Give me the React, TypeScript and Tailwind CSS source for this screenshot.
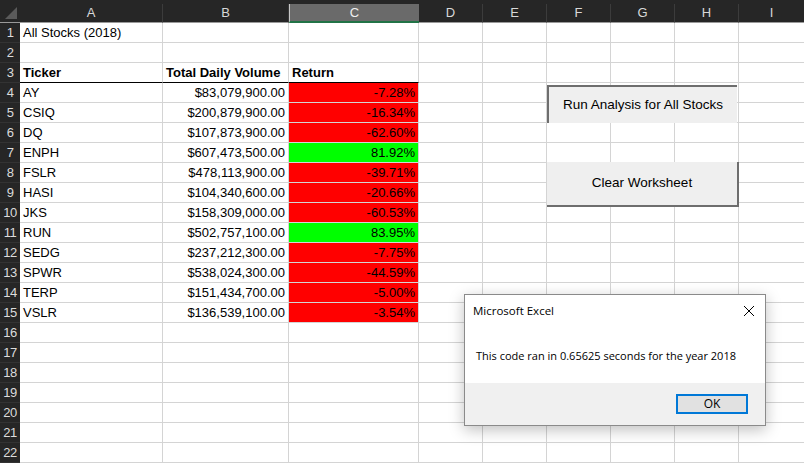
import React from "react"

type Row = {
    ticker: string
    volume: string
    ret: string
    up: boolean
}

const rows: Row[] = [
    { ticker: "AY", volume: "$83,079,900.00", ret: "-7.28%", up: false },
    { ticker: "CSIQ", volume: "$200,879,900.00", ret: "-16.34%", up: false },
    { ticker: "DQ", volume: "$107,873,900.00", ret: "-62.60%", up: false },
    { ticker: "ENPH", volume: "$607,473,500.00", ret: "81.92%", up: true },
    { ticker: "FSLR", volume: "$478,113,900.00", ret: "-39.71%", up: false },
    { ticker: "HASI", volume: "$104,340,600.00", ret: "-20.66%", up: false },
    { ticker: "JKS", volume: "$158,309,000.00", ret: "-60.53%", up: false },
    { ticker: "RUN", volume: "$502,757,100.00", ret: "83.95%", up: true },
    { ticker: "SEDG", volume: "$237,212,300.00", ret: "-7.75%", up: false },
    { ticker: "SPWR", volume: "$538,024,300.00", ret: "-44.59%", up: false },
    { ticker: "TERP", volume: "$151,434,700.00", ret: "-5.00%", up: false },
    { ticker: "VSLR", volume: "$136,539,100.00", ret: "-3.54%", up: false },
]

const cols = [
    { name: "A", w: "w-[143px]" },
    { name: "B", w: "w-[126px]" },
    { name: "C", w: "w-[130px]" },
    { name: "D", w: "w-[64px]" },
    { name: "E", w: "w-[64px]" },
    { name: "F", w: "w-[64px]" },
    { name: "G", w: "w-[64px]" },
    { name: "H", w: "w-[64px]" },
    { name: "I", w: "w-[66px]" },
]

const font = "font-['Liberation_Sans',Arial,sans-serif]"

function cellContent(r: number, c: number) {
    // r is the sheet row number (1-based), c the column index
    if (r === 1 && c === 0) return { text: "All Stocks (2018)", cls: "" }
    if (r === 3 && c === 0) return { text: "Ticker", cls: "font-bold" }
    if (r === 3 && c === 1) return { text: "Total Daily Volume", cls: "font-bold" }
    if (r === 3 && c === 2) return { text: "Return", cls: "font-bold" }
    const d = rows[r - 4]
    if (d && r >= 4) {
        if (c === 0) return { text: d.ticker, cls: "" }
        if (c === 1) return { text: d.volume, cls: "justify-end" }
        if (c === 2) return { text: d.ret, cls: d.up ? "justify-end bg-[#00ff00]" : "justify-end bg-[#ff0000]" }
    }
    return { text: "", cls: "" }
}

const App = () => {
    const sheetRows = Array.from({ length: 22 }, (_, i) => i + 1)

    return (
        <div className={`relative w-[804px] h-[464px] overflow-hidden bg-white ${font}`}>
            <div className="h-[4px] bg-[#262626]" />
            <div className="flex h-[19px] bg-[#262626]">
                <div className="w-[20px] shrink-0 relative border-b border-[#9a9a9a]">
                    <div className="absolute right-[3px] bottom-[3px] w-0 h-0 border-l-[12px] border-l-transparent border-b-[12px] border-b-[#5a5a5a]" />
                </div>
                {cols.map((col) =>
                    col.name === "C" ? (
                        <div
                            key={col.name}
                            className={`${col.w} shrink-0 flex items-center justify-center bg-[#6a6a6a] border-l border-[#c8c8c8] border-b-2 border-b-[#217346] text-[13px] text-[#f0f0f0]`}
                        >
                            {col.name}
                        </div>
                    ) : (
                        <div
                            key={col.name}
                            className={`${col.w} shrink-0 flex items-center justify-center border-r border-[#3c3c3c] border-b border-b-[#9a9a9a] text-[13px] text-[#d8d8d8]`}
                        >
                            {col.name}
                        </div>
                    )
                )}
            </div>

            {sheetRows.map((r) => (
                <div key={r} className="flex h-[20px]">
                    <div className="w-[20px] shrink-0 flex items-center justify-center bg-[#262626] border-b border-[#333333] text-[13px] text-[#dcdcdc] tracking-[-0.5px]">
                        {r}
                    </div>
                    {cols.map((col, c) => {
                        const cell = cellContent(r, c)
                        const headBorder = r === 3 && c <= 2 ? "border-b-black" : "border-b-[#d4d4d4]"
                        return (
                            <div
                                key={col.name}
                                className={`${col.w} shrink-0 flex items-center px-[3px] border-r border-[#d4d4d4] border-b ${headBorder} text-[13px] text-black whitespace-nowrap overflow-visible ${cell.cls}`}
                            >
                                {cell.text}
                            </div>
                        )
                    })}
                </div>
            ))}

            {/* form buttons */}
            <div className="absolute left-[547px] top-[85px] w-[190px] h-[38px] flex items-center justify-center bg-[#efefef] border-t-2 border-l-2 border-[#6e6e6e] text-[13.5px] text-black">
                Run Analysis for All Stocks
            </div>
            <div className="absolute left-[547px] top-[162px] w-[192px] h-[45px] flex items-center justify-center bg-[#efefef] border-r-2 border-b-2 border-[#6e6e6e] text-[13.5px] text-black">
                Clear Worksheet
            </div>

            {/* message box */}
            <div className="absolute left-[464px] top-[294px] w-[302px] h-[132px] flex flex-col border border-[#8a8a8a] bg-white shadow-[0_4px_14px_rgba(0,0,0,0.25)] font-['Open_Sans','Liberation_Sans',sans-serif]">
                <div className="h-[32px] flex items-center justify-between pl-[8px] pr-[10px]">
                    <span className="text-[11.5px] text-black">Microsoft Excel</span>
                    <svg width="12" height="12" viewBox="0 0 12 12">
                        <path d="M1 1 L11 11 M11 1 L1 11" stroke="#000" strokeWidth="1" fill="none" />
                    </svg>
                </div>
                <div className="flex-1 flex items-center pl-[11px] pt-[2px] text-[11px] text-black">
                    This code ran in 0.65625 seconds for the year 2018
                </div>
                <div className="h-[42px] bg-[#f0f0f0] flex items-center justify-end pr-[17px]">
                    <div className="w-[72px] h-[20px] flex items-center justify-center bg-[#e1e1e1] border-2 border-[#0078d7] text-[12px] text-black">
                        OK
                    </div>
                </div>
            </div>
        </div>
    )
}

export default App
